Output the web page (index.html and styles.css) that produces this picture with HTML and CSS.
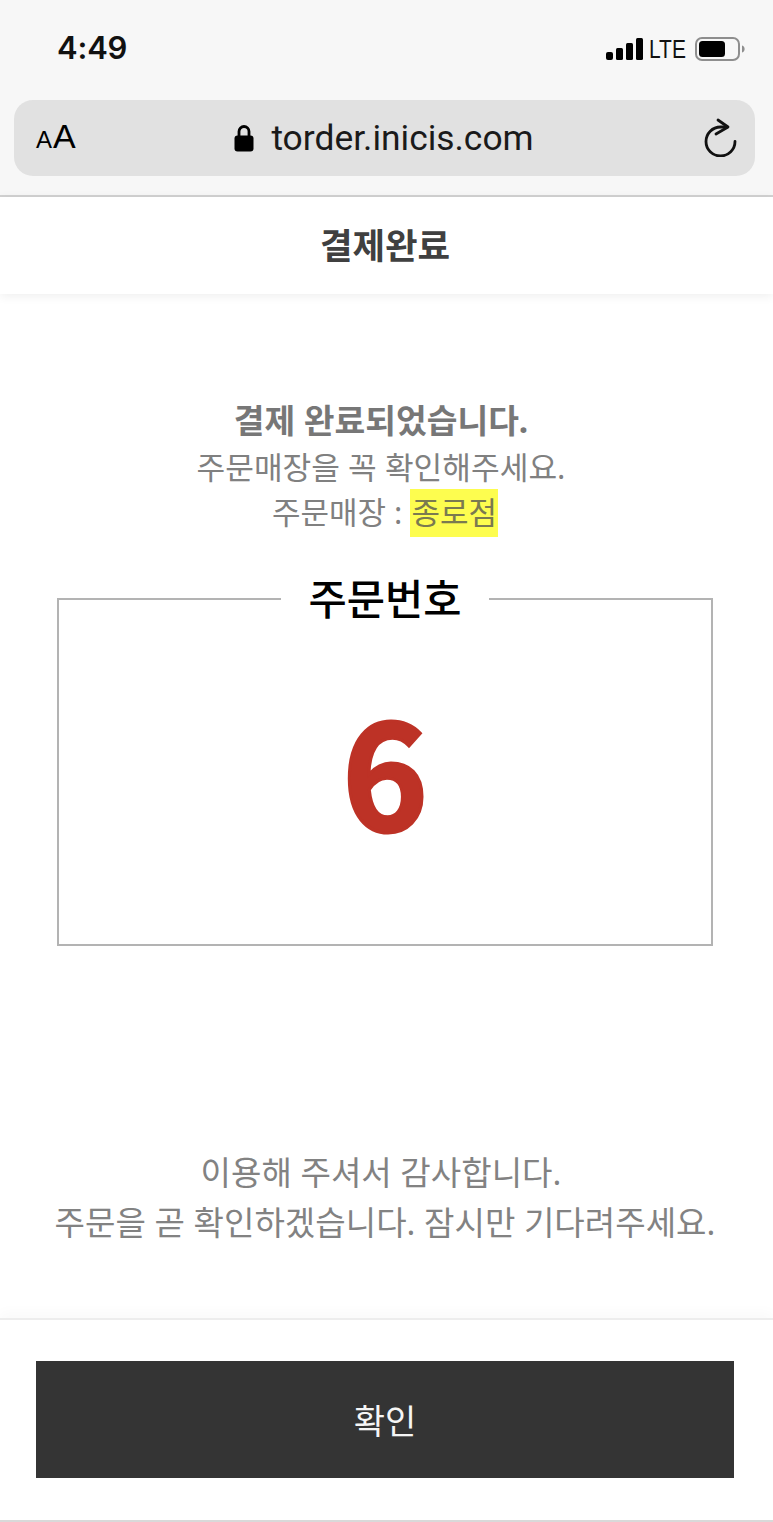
FILE: index.html
```html
<!DOCTYPE html>
<html lang="ko">
<head>
<meta charset="utf-8">
<title>결제완료</title>
<link rel="stylesheet" href="styles.css">
</head>
<body>
<div class="page">
  <div class="chrome">
    <div class="status">
      <span class="time">4:49</span>
      <div class="status-right">
        <svg class="signal" width="37" height="23" viewBox="0 0 37 23"><rect x="0" y="14" width="7" height="8" rx="2"/><rect x="10" y="10" width="7" height="12" rx="1.5"/><rect x="20" y="5" width="7" height="17" rx="1.5"/><rect x="30" y="0" width="7" height="22" rx="1.5"/></svg>
        <span class="lte">LTE</span>
        <svg class="battery" width="50" height="24" viewBox="0 0 50 24"><rect x="1" y="1" width="43" height="22" rx="6" fill="none" stroke="#8e8e8e" stroke-width="2"/><rect x="4" y="4" width="26" height="16" rx="3.5" fill="#000"/><path d="M47 8.5c2 .6 2.6 2 2.6 3.500s-.6 2.900-2.600 3.500z" fill="#8e8e8e"/></svg>
      </div>
    </div>
    <div class="address">
      <span class="aa"><span class="aa-small">A</span>A</span>
      <div class="url">
        <svg class="lock" width="20" height="28" viewBox="0 0 20 28"><path d="M5 13V7.500a5 5 0 0 1 10 0V13" fill="none" stroke="#000" stroke-width="2.800"/><rect x="0.500" y="11.500" width="19" height="16" rx="3" fill="#000"/></svg>
        <span>torder.inicis.com</span>
      </div>
      <svg class="reload" width="36" height="40" viewBox="0 0 36 40"><path d="M25 10H18.500A14.500 14.500 0 1 0 33 24.500" fill="none" stroke="#111" stroke-width="2.800" stroke-linecap="round"/><path d="M16 3l10 7-12 7" fill="none" stroke="#111" stroke-width="2.800" stroke-linecap="round" stroke-linejoin="round"/></svg>
    </div>
  </div>
  <header class="top"><h1>결제완료</h1></header>
  <main class="content">
    <div class="notice">
      <p class="notice-strong">결제 완료되었습니다.</p>
      <p class="notice-check">주문매장을 꼭 확인해주세요.</p>
      <p class="notice-store">주문매장 : <mark>종로점</mark></p>
    </div>
    <fieldset class="order">
      <legend>주문번호</legend>
      <div class="order-num">6</div>
    </fieldset>
    <div class="thanks">
      <p class="thanks-first">이용해 주셔서 감사합니다.</p>
      <p>주문을 곧 확인하겠습니다. 잠시만 기다려주세요.</p>
    </div>
  </main>
  <footer class="bottom">
    <button class="confirm" type="button">확인</button>
  </footer>
</div>
</body>
</html>
```
FILE: styles.css
```css
* { box-sizing: border-box; margin: 0; padding: 0; }
html, body { background: #fff; }
body { font-family: "Noto Sans", "Noto Sans CJK KR", sans-serif; overflow: hidden; }
.page { width: 773px; height: 1522px; display: flex; flex-direction: column; }

.chrome { height: 197px; background: #f7f7f7; border-bottom: 2px solid #d2d2d2; padding: 0 18px 0 14px; display: flex; flex-direction: column; }
.status { height: 100px; display: flex; align-items: flex-start; justify-content: space-between; padding: 30px 10px 0 43px; }
.time { font-family: Inter, "Liberation Sans", sans-serif; font-size: 31px; line-height: 36px; font-weight: 600; color: #111; letter-spacing: -.2px; }
.status-right { display: flex; align-items: center; margin-top: 7px; }
.signal { fill: #000; margin-right: 6px; }
.lte { font-family: "Liberation Sans", sans-serif; font-size: 25px; line-height: 24px; color: #111; transform: scaleX(.84); transform-origin: left; width: 38px; margin-right: 8px; }
.address { height: 76px; background: #e1e1e1; border-radius: 19px; display: grid; grid-template-columns: 1fr auto 1fr; align-items: center; padding: 0 17px 0 22px; }
.aa { font-family: "Liberation Sans", sans-serif; font-size: 34px; line-height: 36px; color: #000; }
.aa-small { font-size: 24px; margin-right: 1px; }
.url { display: flex; align-items: center; gap: 17px; font-family: Roboto, "Liberation Sans", sans-serif; font-size: 35.400px; color: #1a1a1a; margin-left: -6px; }
.reload { justify-self: end; margin-bottom: 2px; }

.top { height: 97px; background: #fff; display: flex; align-items: center; justify-content: center; box-shadow: 0 2px 10px rgba(0,0,0,.07); position: relative; padding: 0 3px 2px 0; }
.top h1 { font-size: 35.400px; font-weight: 700; color: #404040; line-height: 50px; }

.content { flex: 1; display: flex; flex-direction: column; align-items: center; padding: 103px 3px 0 0; }
.notice { text-align: center; color: #808080; font-size: 31px; line-height: 47px; }
.notice-strong { font-weight: 700; font-size: 33.400px; color: #777; padding-right: 8px; }
.notice-check { font-size: 31.200px; padding-right: 8px; }
.notice-store { margin-top: -2px; }
mark { background: #fdfd4f; color: #7a7a50; padding: 0 1px; display: inline-block; height: 48px; }
.order { width: 656px; height: 372px; margin-top: 37px; border: 2px solid #b3b3b3; text-align: center; }
.order legend { margin: 0 auto; padding: 0 27px; font-size: 41.600px; line-height: 50px; color: #000; font-weight: 500; }
.order-num { font-family: "Noto Sans CJK KR", sans-serif; font-size: 146px; line-height: 220px; font-weight: 700; color: #bd3226; -webkit-text-stroke: 3px #bd3226; margin-top: 34px; }
.thanks { text-align: center; color: #828282; font-size: 33.100px; line-height: 50px; margin-top: 202px; }
.thanks-first { padding-right: 8px; }

.bottom { height: 204px; background: #fff; border-top: 2px solid #ededed; border-bottom: 2px solid #d9d9d9; box-shadow: 0 -6px 12px rgba(0,0,0,.025); padding: 41px 39px 0 36px; }
.confirm { display: block; width: 698px; height: 117px; background: #343434; border: 0; color: #f5f5f5; font-family: inherit; font-size: 34px; }
```
